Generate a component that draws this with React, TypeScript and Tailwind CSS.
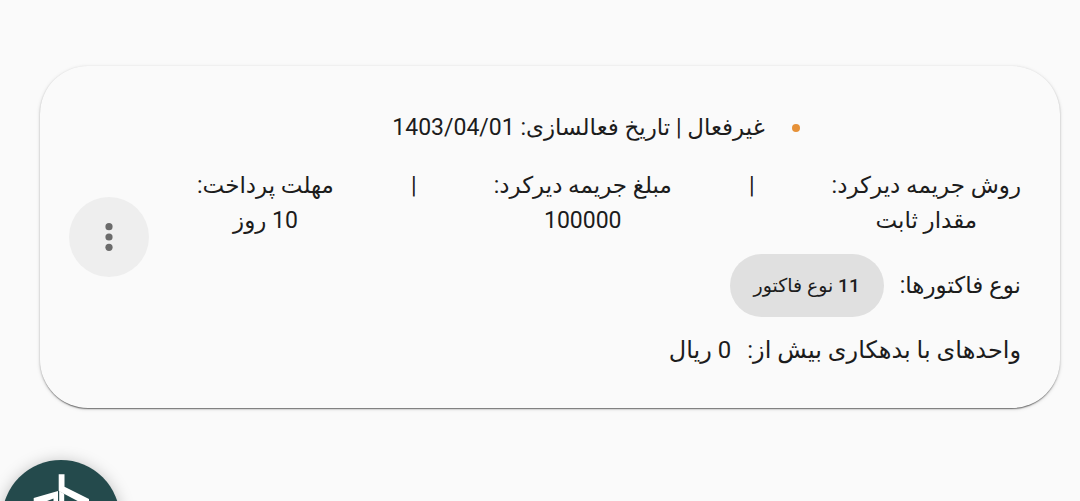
import React from "react";

const details = [
  { label: "روش جریمه دیرکرد:", value: "مقدار ثابت" },
  { label: "مبلغ جریمه دیرکرد:", value: "100000" },
  { label: "مهلت پرداخت:", value: "10 روز" },
];

export default function App() {
  return (
    <div
      dir="rtl"
      className="relative h-screen overflow-hidden bg-[#fafafa] pt-[66px] pr-5 pl-10 font-[Roboto,'DejaVu_Sans',sans-serif] text-[23px] leading-[35px] text-[#1c1c1c]"
    >
      <div className="flex items-center justify-between gap-12 rounded-[48px] bg-[#fafafa] py-10 pr-[39px] pl-[29px] shadow-[0_2px_1px_-1px_rgba(0,0,0,0.35),0_1px_2px_rgba(0,0,0,0.25),0_1px_4px_rgba(0,0,0,0.12)]">
        <div className="min-w-0 flex-1 pt-1">
          {/* Status */}
          <div className="flex items-center justify-center gap-[27px] ps-[26px]">
            <span className="size-2 rounded-full bg-[#e69138]" />
            <p>غیرفعال | تاریخ فعالسازی: 1403/04/01</p>
          </div>

          {/* Penalty details */}
          <div className="mt-[23px] flex justify-between text-center">
            {details.map((item, i) => (
              <React.Fragment key={i}>
                {i > 0 && <span>|</span>}
                <div>
                  <p>{item.label}</p>
                  <p>{item.value}</p>
                </div>
              </React.Fragment>
            ))}
          </div>

          {/* Invoice types */}
          <div className="mt-4 flex items-center gap-4">
            <span>نوع فاکتورها:</span>
            <button className="h-[63px] rounded-full bg-[#e0e0e0] px-6 text-[19px] font-medium">
              11 نوع فاکتور
            </button>
          </div>

          <p className="mt-4 flex gap-4 text-[24px]">
            <span>واحدهای با بدهکاری بیش از:</span>
            <span>0 ریال</span>
          </p>
        </div>

        <button aria-label="گزینه‌ها" className="flex size-20 shrink-0 items-center justify-center rounded-full bg-[#eeeeee] text-[#6b6b6b]">
          <svg viewBox="0 0 8 28" className="h-7 w-2" fill="currentColor">
            <circle cx="4" cy="3.7" r="3.6" />
            <circle cx="4" cy="14" r="3.6" />
            <circle cx="4" cy="24.3" r="3.6" />
          </svg>
        </button>
      </div>

      {/* Floating logo button */}
      <button aria-label="خانه" className="absolute top-[460px] left-[2px] size-[118px] rounded-full bg-[#244a4c] shadow-[0_2px_16px_rgba(0,0,0,0.25)]">
        <svg viewBox="0 0 118 118" className="size-full" fill="#fff">
          <path d="M56.7 14.3h5.8v12.5L87 39v8L56.7 31z" />
          <path d="M31.7 38l24.3-7v40h-4.5V38.5l-9 3.5-3 20h-7.8z" />
          <path d="M57.2 31l5 2.8V71h-5z" />
        </svg>
      </button>
    </div>
  );
}
